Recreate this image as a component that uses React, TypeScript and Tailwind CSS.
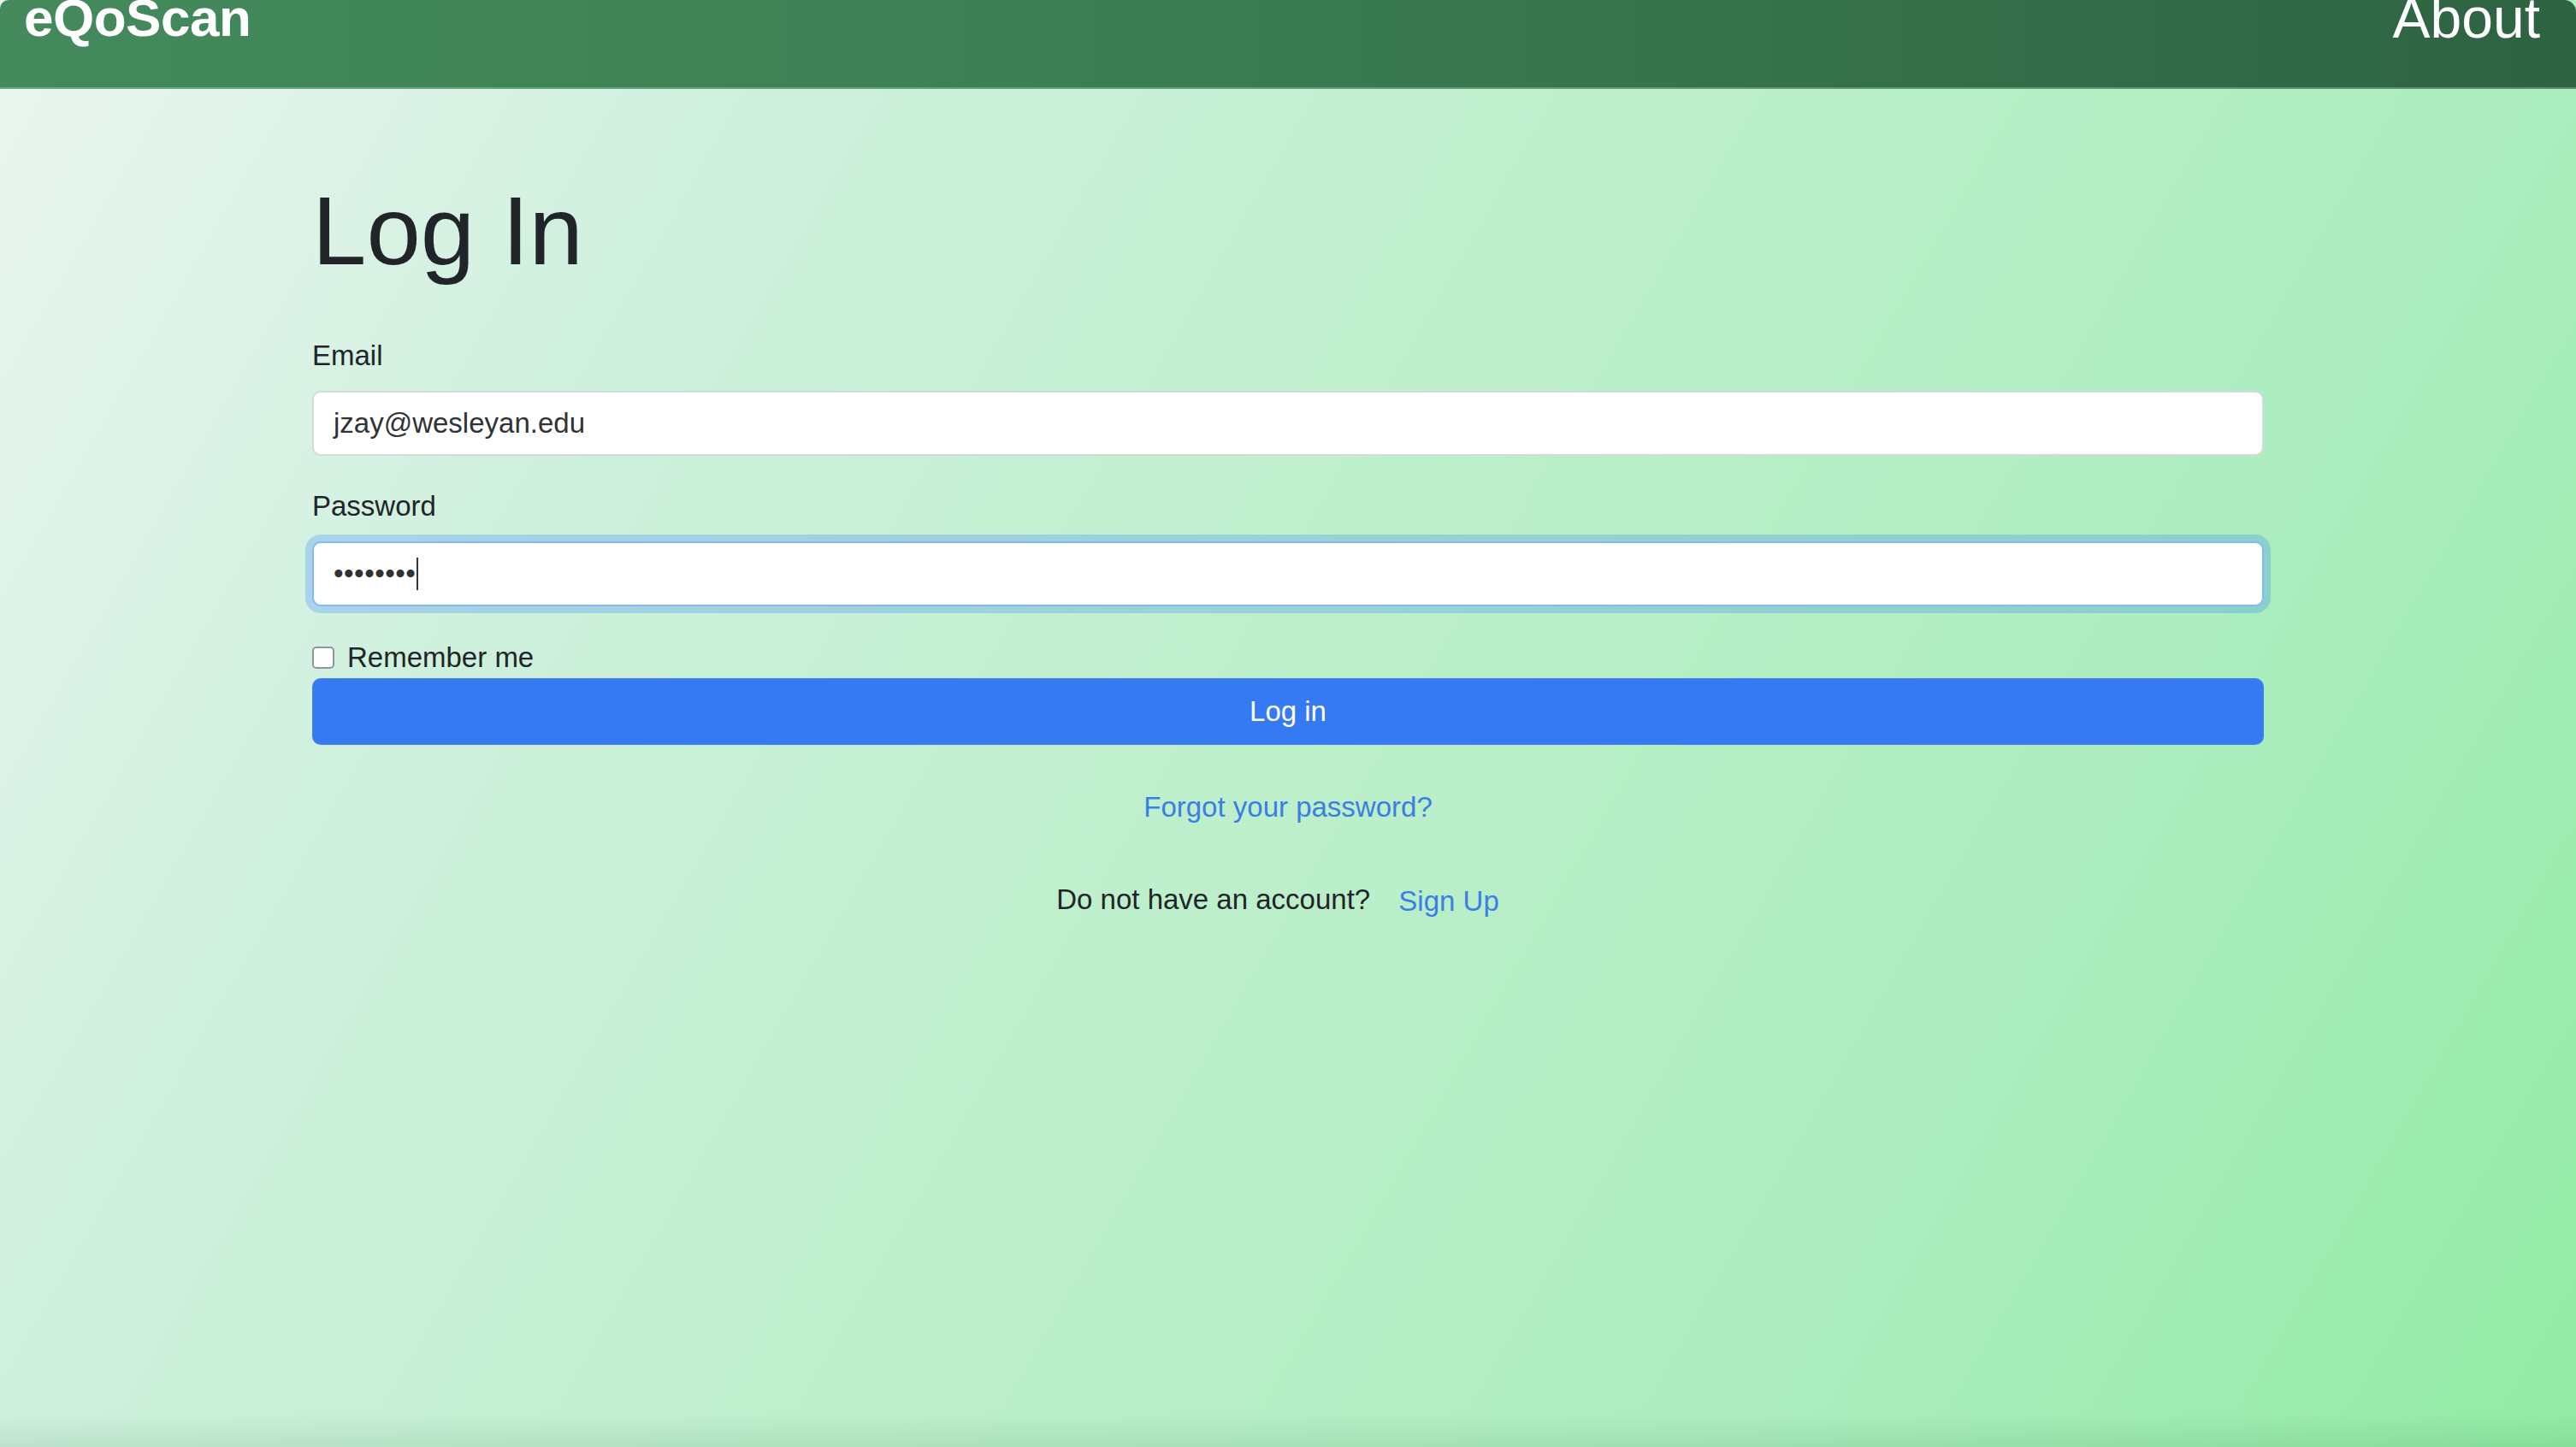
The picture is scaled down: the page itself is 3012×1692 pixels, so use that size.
import React from "react";

export default function App() {
  return (
    <div
      className="relative w-full h-[1692px] overflow-hidden bg-[linear-gradient(120deg,#ebf5f0_0%,#cdf0dc_25%,#bdefcb_50%,#adedc0_75%,#92eba4_100%)] text-[#212529]"
      style={{ fontFamily: '"Liberation Sans", Arial, Helvetica, sans-serif' }}
    >
      <header className="h-[104px] flex justify-between items-start pl-[28px] pr-[42px] bg-[linear-gradient(90deg,#448a5c_0%,#3c7f54_40%,#346f4a_75%,#2e6341_100%)] rounded-tr-[14px] rounded-tl-[10px] border-b-2 border-[#9ed8b0]/40">
        <span className="text-white font-bold text-[62px] leading-[62px] -mt-[10px] tracking-[-0.5px]">
          eQoScan
        </span>
        <span className="text-white text-[66px] leading-[66px] -mt-[12px]">About</span>
      </header>

      <main className="w-[2282px] mx-auto pt-[94px]">
        <h1 className="text-[114px] leading-[144px] h-[144px] font-normal">Log In</h1>

        <form className="mt-[50px] flex flex-col" onSubmit={(e) => e.preventDefault()}>
          <label className="block text-[33px] leading-[48px] mb-[17px]">Email</label>
          <div className="h-[76px] w-full bg-white border-2 border-[#d4dad6] rounded-[10px] flex items-center pl-[23px] text-[33px] text-[#2f3336]">
            jzay@wesleyan.edu
          </div>

          <label className="block text-[33px] leading-[48px] mb-[17px] mt-[35px]">Password</label>
          <div className="h-[76px] w-full bg-white border-2 border-[#86b7fe] rounded-[10px] flex items-center pl-[23px] text-[33px] text-[#2f3336] shadow-[0_0_0_8px_rgba(13,110,253,0.22)]">
            <span className="tracking-[0.5px]">••••••••</span>
            <span className="inline-block w-[2px] h-[38px] bg-[#333] ml-[1px]" />
          </div>

          <div className="mt-[36px] h-[48px] flex items-center">
            <span className="inline-block w-[26px] h-[26px] bg-white border-2 border-[#8f9599] rounded-[5px]" />
            <span className="ml-[15px] text-[33px] leading-[48px]">Remember me</span>
          </div>

          <button
            type="submit"
            className="h-[78px] w-full rounded-[10px] bg-[#3579f3] text-white text-[33px] leading-[48px] border-2 border-[#3a7ef0]"
          >
            Log in
          </button>

          <div className="mt-[49px] text-center text-[33px] leading-[48px]">
            <a className="text-[#3b7fe4] cursor-pointer">Forgot your password?</a>
          </div>

          <div className="mt-[60px] text-center text-[33px] leading-[48px]">
            <span>Do not have an account?</span>{" "}
            <a className="inline-block px-[24px] text-[#3b7fe4] translate-y-[2px] cursor-pointer">Sign Up</a>
          </div>
        </form>
      </main>

      <div className="absolute left-0 right-0 bottom-0 h-[40px] bg-[linear-gradient(180deg,rgba(0,60,20,0)_0%,rgba(0,60,20,0.08)_100%)] pointer-events-none" />
    </div>
  );
}
